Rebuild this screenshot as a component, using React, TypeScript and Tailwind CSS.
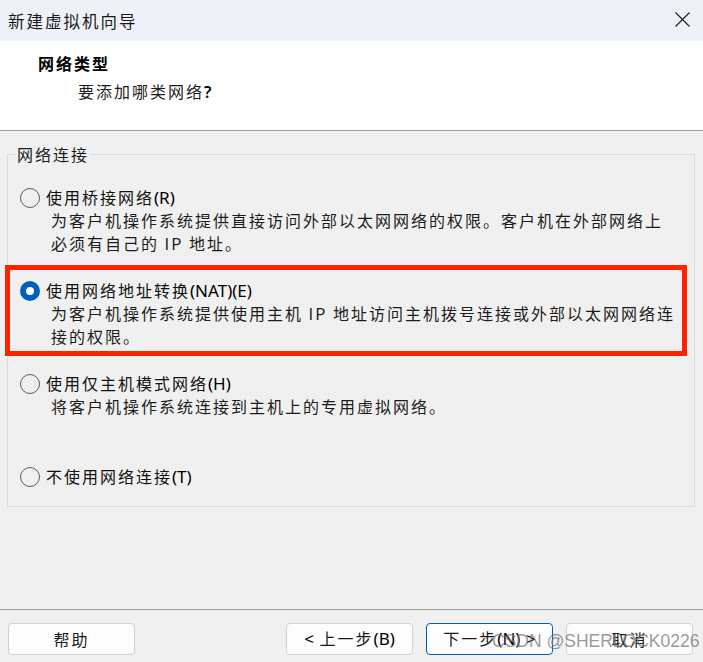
import React from "react";

const FONT = { fontFamily: '"Noto Sans CJK SC", "Noto Sans", sans-serif' };
const LATIN = { fontFamily: '"Noto Sans", "Open Sans", sans-serif' };

function Mixed({ text }: { text: string }) {
  const parts = text.split(/([\x21-\x7e]+)/);
  return (
    <span className="whitespace-pre">
      {parts.map((p, i) =>
        /^[\x21-\x7e]+$/.test(p) ? (
          <span key={i} className="tracking-normal text-[17px] text-black" style={LATIN}>
            {p}
          </span>
        ) : (
          <span key={i}>{p}</span>
        )
      )}
    </span>
  );
}

function Radio({ checked }: { checked?: boolean }) {
  return checked ? (
    <span className="w-[20px] h-[20px] rounded-full border-[6px] border-[#005fb8] bg-white shrink-0" />
  ) : (
    <span className="w-[20px] h-[20px] rounded-full border border-[#5c5c5c] shrink-0" />
  );
}

function Option({
  label,
  lines,
  checked,
}: {
  label: string;
  lines: string[];
  checked?: boolean;
}) {
  return (
    <div className="h-[93px] flex flex-col">
      <div className="flex items-center h-[23px] pl-[12px] gap-[6px]">
        <Radio checked={checked} />
        <span className="leading-[23px] text-[#111]">
          <Mixed text={label} />
        </span>
      </div>
      {lines.map((l, i) => (
        <div key={i} className="pl-[43px] leading-[23px] text-[#1c1c1c] whitespace-pre">
          {l}
        </div>
      ))}
    </div>
  );
}

function Btn({ children, primary }: { children: React.ReactNode; primary?: boolean }) {
  return (
    <div
      className={
        "w-[127px] h-[32px] rounded-[4px] border flex items-center justify-center bg-[#fdfdfd] text-[#1a1a1a] " +
        (primary ? "border-[#005fb8]" : "border-[#d0d0d0]")
      }
    >
      <span className="whitespace-pre">{children}</span>
    </div>
  );
}

export default function App() {
  return (
    <div
      className="relative w-[703px] h-[662px] bg-[#f0f0f0] flex flex-col overflow-hidden text-[16px] tracking-[2px]"
      style={FONT}
    >
      {/* title bar */}
      <div className="h-[41px] bg-[#eef2f7] flex items-center justify-between pl-[8px] pr-[13px] shrink-0">
        <span className="text-[#1a1a1a] leading-[22px] text-[16.5px]">新建虚拟机向导</span>
        <svg width="15" height="15" viewBox="0 0 15 15" className="mt-[-2px]">
          <path d="M0.5 0.5 L14.5 14.5 M14.5 0.5 L0.5 14.5" stroke="#1a1a1a" strokeWidth="1.1" />
        </svg>
      </div>

      {/* header */}
      <div className="h-[90px] bg-white border-b border-[#a0a0a0] shrink-0 pt-[11px]">
        <div className="pl-[38px] leading-[22px] font-bold text-black">网络类型</div>
        <div className="pl-[78px] leading-[22px] mt-[6px] text-[#1c1c1c]">
          要添加哪类网络
          <span className="tracking-normal font-semibold text-black" style={LATIN}>
            ?
          </span>
        </div>
      </div>

      {/* body */}
      <div className="flex-1 pt-[23px]">
        <div className="relative ml-[7px] w-[688px] h-[353px] border border-[#dcdcdc] pt-[31px]">
          <span className="absolute -top-[12px] left-[8px] px-[1px] bg-[#f0f0f0] leading-[22px] text-[#1c1c1c]">
            网络连接
          </span>
          <Option
            label="使用桥接网络(R)"
            lines={[
              "为客户机操作系统提供直接访问外部以太网网络的权限。客户机在外部网络上",
              "必须有自己的 IP 地址。",
            ]}
          />
          <Option
            checked
            label="使用网络地址转换(NAT)(E)"
            lines={[
              "为客户机操作系统提供使用主机 IP 地址访问主机拨号连接或外部以太网网络连",
              "接的权限。",
            ]}
          />
          <Option label="使用仅主机模式网络(H)" lines={["将客户机操作系统连接到主机上的专用虚拟网络。"]} />
          <Option label="不使用网络连接(T)" lines={[]} />
          {/* red annotation box */}
          <div className="absolute left-[-3px] top-[110px] w-[682px] h-[91px] border-[5px] border-[#ff2200] pointer-events-none" />
        </div>
      </div>

      {/* footer */}
      <div className="h-[53px] border-t border-[#a0a0a0] shrink-0 pt-[13px] pl-[8px] pr-[10px] flex justify-between items-start">
        <Btn>帮助</Btn>
        <div className="flex gap-[13px]">
          <Btn>
            <Mixed text="< 上一步(B)" />
          </Btn>
          <Btn primary>
            <Mixed text="下一步(N) >" />
          </Btn>
          <Btn>取消</Btn>
        </div>
      </div>

      {/* watermark */}
      <div
        className="absolute z-10 left-[492px] top-[630px] text-[17.5px] leading-[22px] tracking-normal text-[rgba(120,120,120,0.75)] pointer-events-none"
        style={{ fontFamily: '"Liberation Sans", Arial, sans-serif' }}
      >
        CSDN @SHERLOCK0226
      </div>
    </div>
  );
}
